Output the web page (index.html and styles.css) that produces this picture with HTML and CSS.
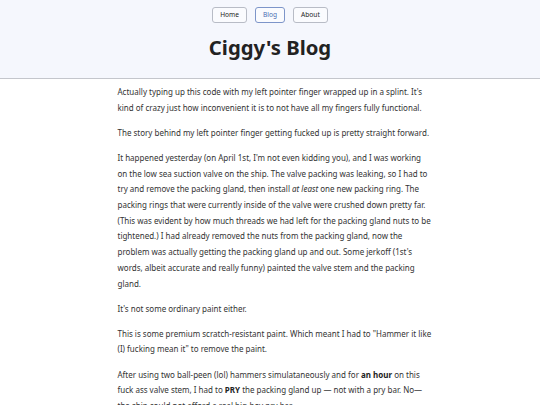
FILE: index.html
```html
<!DOCTYPE html>
<html lang="en">
<head>
<meta charset="utf-8">
<title>Ciggy's Blog</title>
<link rel="stylesheet" href="styles.css">
</head>
<body>
<header class="site-header">
  <nav class="nav">
    <a class="nav-btn" href="#">Home</a>
    <a class="nav-btn active" href="#">Blog</a>
    <a class="nav-btn" href="#">About</a>
  </nav>
  <h1 class="title">Ciggy's Blog</h1>
</header>
<main class="post">
  <p>Actually typing up this code with my left pointer finger wrapped up in a splint. It's kind of crazy just how inconvenient it is to not have all my fingers fully functional.</p>
  <p>The story behind my left pointer finger getting fucked up is pretty straight forward.</p>
  <p>It happened yesterday (on April 1st, I'm not even kidding you), and I was working on the low sea suction valve on the ship. The valve packing was leaking, so I had to try and remove the packing gland, then install <em>at least</em> one new packing ring. The packing rings that were currently inside of the valve were crushed down pretty far. (This was evident by how much threads we had left for the packing gland nuts to be tightened.) I had already removed the nuts from the packing gland, now the problem was actually getting the packing gland up and out. Some jerkoff (1st's words, albeit accurate and really funny) painted the valve stem and the packing gland.</p>
  <p>It's not some ordinary paint either.</p>
  <p>This is some premium scratch-resistant paint. Which meant I had to "Hammer it like (I) fucking mean it" to remove the paint.</p>
  <p>After using two ball-peen (lol) hammers simulataneously and for <strong>an hour</strong> on this fuck ass valve stem, I had to <strong>PRY</strong> the packing gland up — not with a pry bar. No—the ship could not afford a real big-boy pry bar.</p>
  <p>I used a 38mm wrench and a fucking mallet. (Genuinely big props to the 1st for giving me this tip. You can't learn these types of tips in the maritime academy for sure.)</p>
</main>
</body>
</html>
```
FILE: styles.css
```css
html, body {
  margin: 0;
  padding: 0;
}
body {
  font-family: "Noto Sans", "Open Sans", sans-serif;
  color: #333;
  background: #fff;
}
.site-header {
  background: #f5f7fd;
  border-bottom: 1px solid #c4c6cc;
  padding: 7px 0 18px;
  text-align: center;
}
.nav {
  display: flex;
  justify-content: center;
  gap: 8px;
}
.nav-btn {
  display: inline-block;
  font-size: 6.6px;
  line-height: 14px;
  padding: 0 7px;
  border: 1px solid #b8bcc6;
  border-radius: 3px;
  background: #fafbfe;
  color: #222;
  text-decoration: none;
}
.nav-btn.active {
  border-color: #7d95c9;
  color: #4a6bb3;
}
.title {
  margin: 11px 0 0;
  font-size: 20.3px;
  font-weight: 700;
  color: #222;
  line-height: 26px;
}
.post {
  max-width: 314px;
  margin: 0 auto;
  padding: 5px 0 0 9px;
  font-size: 8px;
  line-height: 15.7px;
}
.post p {
  margin: 0 0 9.4px;
}
.post strong {
  font-weight: 700;
  color: #222;
}
```
